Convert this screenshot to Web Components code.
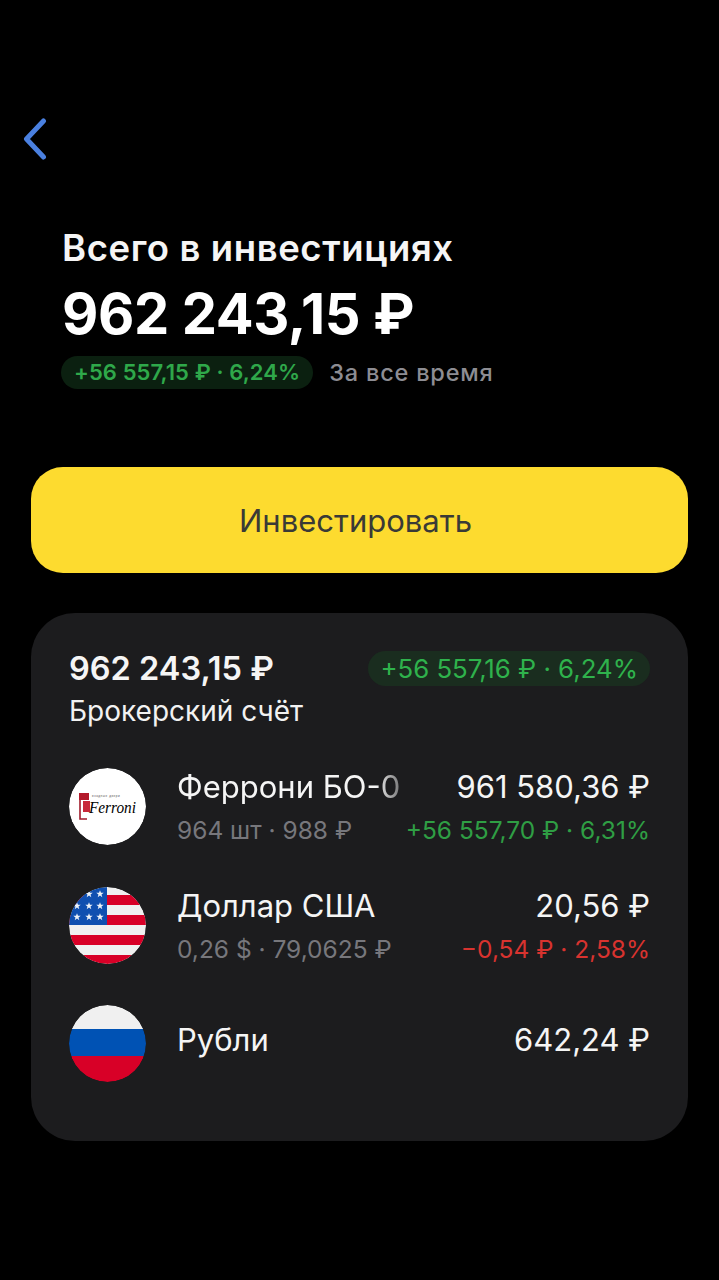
<!DOCTYPE html>
<html lang="ru">
<head>
<meta charset="utf-8">
<title>Всего в инвестициях</title>
<style>
    html, body { margin: 0; padding: 0; background: #000; }
    body { font-family: Inter, "Noto Sans", sans-serif; color: #fff; }
</style>
</head>
<body>
<svg width="0" height="0" style="position:absolute">
    <defs>
        <path id="star" d="M0-3.8 1-1.2H3.7L1.5.5 2.3 3.2 0 1.6-2.3 3.2-1.5.5-3.7-1.2H-1z" fill="#eef2f8"/>
        <clipPath id="us"><circle cx="38.5" cy="38.5" r="38.5"/></clipPath>
        <clipPath id="ru"><circle cx="38.5" cy="38.5" r="38.5"/></clipPath>
    </defs>
</svg>
<app-page>
    <back-button></back-button>
    <total-header></total-header>
    <invest-button>Инвестировать</invest-button>
    <account-card>
        <asset-row name="Феррони БО-0" sub="964 шт · 988 ₽" value="961 580,36 ₽" change="+56 557,70 ₽ · 6,31%" trend="up" fade>
            <svg slot="icon" viewBox="0 0 77 77" width="77" height="77">
                <circle cx="38.5" cy="38.5" r="38.5" fill="#fff"/>
                <path d="M10 25h10v7h-10z" fill="#b3192b"/>
                <path d="M11 32v19h7" fill="none" stroke="#a11a2a" stroke-width="1.6"/>
                <path d="M14 33h7v11h-7z" fill="#c8283a"/>
                <text x="23" y="28.5" font-family="Liberation Sans" font-size="3" letter-spacing=".55" fill="#555">входные двери</text>
                <text x="20" y="45" font-family="Liberation Serif" font-style="italic" font-size="17" textLength="47" lengthAdjust="spacingAndGlyphs" fill="#000">Ferroni</text>
            </svg>
        </asset-row>
        <asset-row name="Доллар США" sub="0,26 $ · 79,0625 ₽" value="20,56 ₽" change="−0,54 ₽ · 2,58%" trend="down">
            <svg slot="icon" viewBox="0 0 77 77" width="77" height="77">
                <g clip-path="url(#us)">
                    <rect width="77" height="77" fill="#f0f0f0"/>
                    <rect y="8" width="77" height="10" fill="#d80027"/>
                    <rect y="28" width="77" height="10" fill="#d80027"/>
                    <rect y="48" width="77" height="10" fill="#d80027"/>
                    <rect y="68" width="77" height="10" fill="#d80027"/>
                    <rect width="38" height="38" fill="#0f4fb0"/>
                    <use href="#star" x="20" y="7"/>
                    <use href="#star" x="31" y="7"/>
                    <use href="#star" x="8" y="19"/>
                    <use href="#star" x="20" y="19"/>
                    <use href="#star" x="31" y="19"/>
                    <use href="#star" x="8" y="30"/>
                    <use href="#star" x="20" y="30"/>
                    <use href="#star" x="31" y="30"/>
                </g>
            </svg>
        </asset-row>
        <asset-row name="Рубли" value="642,24 ₽">
            <svg slot="icon" viewBox="0 0 77 77" width="77" height="77">
                <g clip-path="url(#ru)">
                    <rect width="77" height="24" fill="#f0f0f0"/>
                    <rect y="24" width="77" height="27" fill="#0052b4"/>
                    <rect y="51" width="77" height="26" fill="#d80027"/>
                </g>
            </svg>
        </asset-row>
    </account-card>
</app-page>

<script>
class AppPage extends HTMLElement {
    constructor() {
        super();
        this.attachShadow({mode: 'open'});
        this.shadowRoot.innerHTML = `
            <style>
                :host {
                    display: flex;
                    flex-direction: column;
                    box-sizing: border-box;
                    width: 719px;
                    height: 1280px;
                    padding: 118px 31px 0;
                    background: #000;
                    overflow: hidden;
                }
            </style>
            <slot></slot>
        `;
    }
}

class BackButton extends HTMLElement {
    constructor() {
        super();
        this.attachShadow({mode: 'open'});
        this.shadowRoot.innerHTML = `
            <style>
                :host { display: block; height: 42px; margin-left: -9px; }
                svg { display: block; }
            </style>
            <svg width="26" height="42" viewBox="0 0 26 42" fill="none">
                <path d="M21.5 3 L4.5 21 L21.5 39" stroke="#4a80e0" stroke-width="5" stroke-linecap="round" stroke-linejoin="round"/>
            </svg>
        `;
    }
}

class TotalHeader extends HTMLElement {
    constructor() {
        super();
        this.attachShadow({mode: 'open'});
        this.shadowRoot.innerHTML = `
            <style>
                :host {
                    display: flex;
                    flex-direction: column;
                    align-items: flex-start;
                    margin-top: 66px;
                    padding-left: 30px;
                    height: 241px;
                }
                .title { font-size: 36.5px; line-height: 44px; font-weight: 600; color: #f5f5f5; letter-spacing: .6px; margin-left: 1px; }
                .total { font-size: 56px; line-height: 62px; font-weight: 700; margin-top: 13px; letter-spacing: -.4px; margin-left: 1px; }
                .line { display: flex; align-items: center; gap: 16px; margin-top: 11px; }
                .pill {
                    font-size: 22px; line-height: 33px; font-weight: 600;
                    color: #2fa84a; background: #0b2010;
                    border-radius: 17px; padding: 0 13px;
                    letter-spacing: .1px;
                }
                .note { font-size: 23.5px; font-weight: 500; color: #8d8d93; letter-spacing: .8px; }
            </style>
            <div class="title">Всего в инвестициях</div>
            <div class="total">962 243,15 ₽</div>
            <div class="line">
                <span class="pill">+56 557,15 ₽ · 6,24%</span>
                <span class="note">За все время</span>
            </div>
        `;
    }
}

class InvestButton extends HTMLElement {
    constructor() {
        super();
        this.attachShadow({mode: 'open'});
        this.shadowRoot.innerHTML = `
            <style>
                :host {
                    display: flex;
                    align-items: center;
                    justify-content: center;
                    box-sizing: border-box;
                    height: 106px;
                    padding-right: 8px;
                    border-radius: 32px;
                    background: #fddb2f;
                    color: #3a3a36;
                    font-size: 31px;
                }
            </style>
            <slot></slot>
        `;
    }
}

class AccountCard extends HTMLElement {
    constructor() {
        super();
        this.attachShadow({mode: 'open'});
        this.shadowRoot.innerHTML = `
            <style>
                :host {
                    display: block;
                    box-sizing: border-box;
                    height: 528px;
                    margin-top: 40px;
                    padding: 36px 38px 0;
                    border-radius: 44px;
                    background: #1c1c1e;
                }
                .head { display: flex; justify-content: space-between; align-items: center; height: 38px; }
                .sum { font-size: 32.5px; font-weight: 600; color: #f5f5f5; }
                .pill {
                    font-size: 25.8px; line-height: 35px; color: #2fb24c;
                    background: #1a2d1f; border-radius: 18px; padding: 0 12px;
                }
                .name { font-size: 28px; line-height: 36px; margin-top: 6px; color: #f2f2f2; }
                .rows { display: flex; flex-direction: column; gap: 42px; margin-top: 38px; }
            </style>
            <div class="head">
                <span class="sum">962 243,15 ₽</span>
                <span class="pill">+56 557,16 ₽ · 6,24%</span>
            </div>
            <div class="name">Брокерский счёт</div>
            <div class="rows"><slot></slot></div>
        `;
    }
}

class AssetRow extends HTMLElement {
    connectedCallback() {
        if (this.shadowRoot) return;
        this.attachShadow({mode: 'open'});
        const sub = this.getAttribute('sub');
        const change = this.getAttribute('change');
        const trend = this.getAttribute('trend') === 'down' ? '#d8332f' : '#2f9e44';
        this.shadowRoot.innerHTML = `
            <style>
                :host { display: grid; grid-template-columns: 77px 1fr auto; column-gap: 31px; align-items: center; height: 77px; }
                .icon { width: 77px; height: 77px; border-radius: 50%; overflow: hidden; }
                ::slotted(svg) { display: block; }
                .col { display: flex; flex-direction: column; gap: 7px; min-width: 0; }
                .single { padding-bottom: 8px; }
                .right { align-items: flex-end; }
                .main { font-size: 31px; line-height: 40px; color: #f5f5f5; white-space: nowrap; }
                .sub { font-size: 24.5px; line-height: 32px; color: #77777c; white-space: nowrap; }
                .name.fade {
                    width: 226px; overflow: hidden;
                    -webkit-mask-image: linear-gradient(90deg, #000 88%, rgba(0,0,0,.35));
                    mask-image: linear-gradient(90deg, #000 88%, rgba(0,0,0,.35));
                }
                .change { color: ${trend}; }
            </style>
            <div class="icon"><slot name="icon"></slot></div>
            <div class="col ${sub ? '' : 'single'}">
                <div class="main name ${this.hasAttribute('fade') ? 'fade' : ''}">${this.getAttribute('name')}</div>
                ${sub ? `<div class="sub">${sub}</div>` : ''}
            </div>
            <div class="col right ${change ? '' : 'single'}">
                <div class="main">${this.getAttribute('value')}</div>
                ${change ? `<div class="sub change">${change}</div>` : ''}
            </div>
        `;
    }
}

customElements.define('app-page', AppPage);
customElements.define('back-button', BackButton);
customElements.define('total-header', TotalHeader);
customElements.define('invest-button', InvestButton);
customElements.define('account-card', AccountCard);
customElements.define('asset-row', AssetRow);
</script>
</body>
</html>
